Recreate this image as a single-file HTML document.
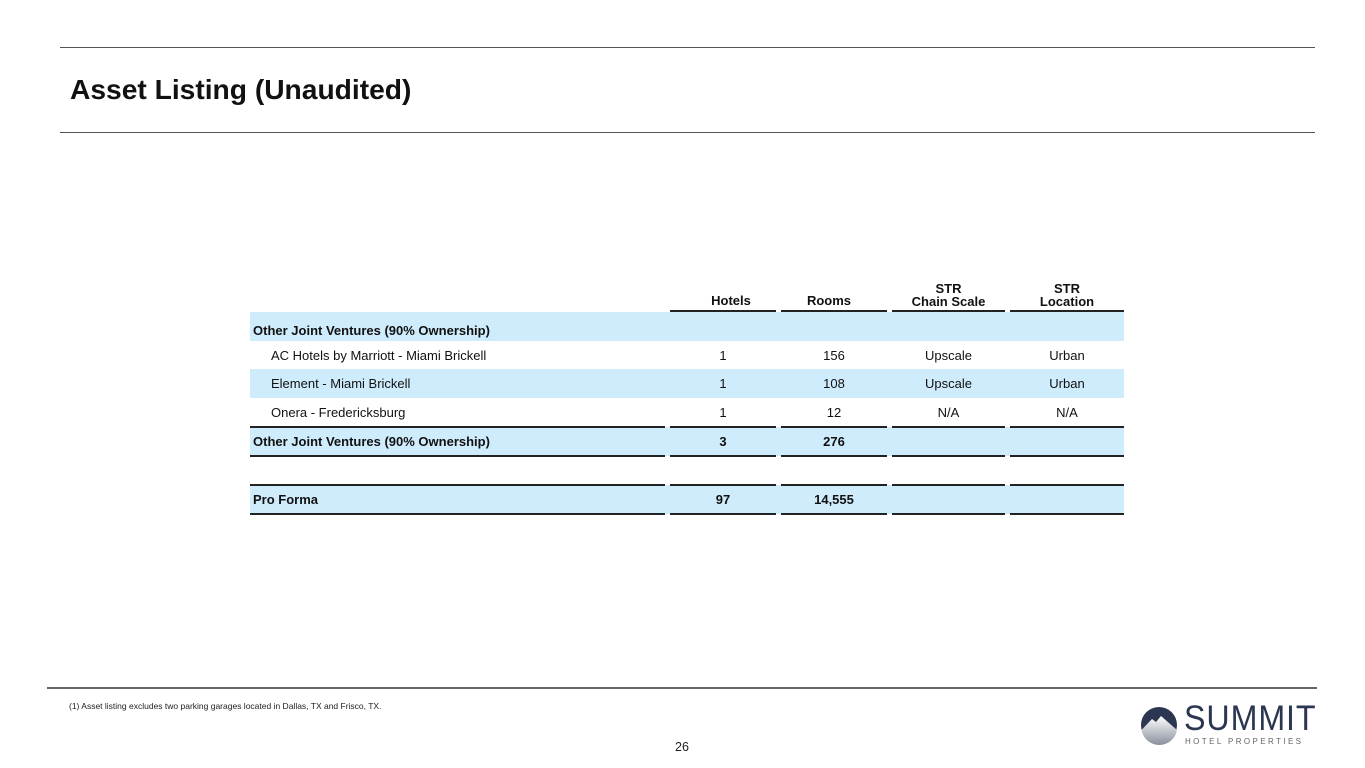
<!DOCTYPE html>
<html><head><meta charset="utf-8"><style>
*{margin:0;padding:0;box-sizing:border-box}
body{width:1365px;height:768px;background:#fff;position:relative;overflow:hidden;font-family:"Liberation Sans",Arial,sans-serif;color:#111}
.a{position:absolute}
.hl{position:absolute;height:1px;background:#555}
.band{position:absolute;left:250px;width:874px;height:29px;background:#cfecfc}
.t{position:absolute;font-size:13px;line-height:29px;white-space:nowrap}
.c{text-align:center}
.b{font-weight:bold}
.ln{position:absolute;height:2px;background:#222}
</style></head><body>
<div class="hl" style="left:60px;width:1255px;top:47px"></div>
<div class="a b" style="left:70px;top:72px;font-size:28.2px;line-height:34px;color:#111">Asset Listing (Unaudited)</div>
<div class="hl" style="left:60px;width:1255px;top:132px"></div>

<div class="band" style="top:312px"></div>
<div class="band" style="top:369px"></div>
<div class="band" style="top:427px"></div>
<div class="band" style="top:485px"></div>

<div class="t b c" style="left:678px;width:106px;top:281px;line-height:13px;padding-top:13px">Hotels</div>
<div class="t b c" style="left:776px;width:106px;top:281px;line-height:13px;padding-top:13px">Rooms</div>
<div class="t b c" style="left:892px;width:113px;top:282px;line-height:13px">STR<br>Chain Scale</div>
<div class="t b c" style="left:1010px;width:114px;top:282px;line-height:13px">STR<br>Location</div>

<div class="ln" style="left:670px;width:106px;top:310px"></div>
<div class="ln" style="left:781px;width:106px;top:310px"></div>
<div class="ln" style="left:892px;width:113px;top:310px"></div>
<div class="ln" style="left:1010px;width:114px;top:310px"></div>
<div id="L"></div>

<div class="t b" style="left:253px;top:316px">Other Joint Ventures (90% Ownership)</div>

<div class="t" style="left:271px;top:341px">AC Hotels by Marriott - Miami Brickell</div>
<div class="t c" style="left:670px;width:106px;top:341px">1</div>
<div class="t c" style="left:781px;width:106px;top:341px">156</div>
<div class="t c" style="left:892px;width:113px;top:341px">Upscale</div>
<div class="t c" style="left:1010px;width:114px;top:341px">Urban</div>

<div class="t" style="left:271px;top:369px">Element - Miami Brickell</div>
<div class="t c" style="left:670px;width:106px;top:369px">1</div>
<div class="t c" style="left:781px;width:106px;top:369px">108</div>
<div class="t c" style="left:892px;width:113px;top:369px">Upscale</div>
<div class="t c" style="left:1010px;width:114px;top:369px">Urban</div>

<div class="t" style="left:271px;top:398px">Onera - Fredericksburg</div>
<div class="t c" style="left:670px;width:106px;top:398px">1</div>
<div class="t c" style="left:781px;width:106px;top:398px">12</div>
<div class="t c" style="left:892px;width:113px;top:398px">N/A</div>
<div class="t c" style="left:1010px;width:114px;top:398px">N/A</div>

<div class="t b" style="left:253px;top:427px">Other Joint Ventures (90% Ownership)</div>
<div class="t b c" style="left:670px;width:106px;top:427px">3</div>
<div class="t b c" style="left:781px;width:106px;top:427px">276</div>

<div class="t b" style="left:253px;top:485px">Pro Forma</div>
<div class="t b c" style="left:670px;width:106px;top:485px">97</div>
<div class="t b c" style="left:781px;width:106px;top:485px">14,555</div>

<script>
var ys=[426,455,484,513],xs=[[250,415],[670,106],[781,106],[892,113],[1010,114]],h='';
ys.forEach(function(y){xs.forEach(function(x){h+='<div class="ln" style="left:'+x[0]+'px;width:'+x[1]+'px;top:'+y+'px"></div>'})});
document.getElementById('L').innerHTML=h;
</script>

<div class="a" style="left:47px;top:687px;width:1270px;height:2px;background:#666"></div>
<div class="a" style="left:69px;top:701px;font-size:8.5px;color:#222">(1) Asset listing excludes two parking garages located in Dallas, TX and Frisco, TX.</div>
<div class="a" style="left:675px;top:740px;font-size:12.5px;color:#222">26</div>

<svg class="a" style="left:1140px;top:706px" width="40" height="40" viewBox="0 0 40 40">
<defs><linearGradient id="g" x1="0" y1="0" x2="0" y2="1"><stop offset="0" stop-color="#fff"/><stop offset="1" stop-color="#8a8f9c"/></linearGradient></defs>
<circle cx="19" cy="19" r="18" fill="#2b3650"/>
<path d="M1.5 24 L12 13 L16 16 L21 10 L37 24 A18 18 0 0 1 1.5 24Z" fill="url(#g)"/>
</svg>
<div class="a" style="left:1184px;top:701px;font-size:35px;line-height:36px;color:#2b3650;letter-spacing:1px;transform:scaleX(0.92);transform-origin:left">SUMMIT</div>
<div class="a" style="left:1185px;top:737px;font-size:8px;color:#666;letter-spacing:2.4px">HOTEL PROPERTIES</div>
</body></html>
